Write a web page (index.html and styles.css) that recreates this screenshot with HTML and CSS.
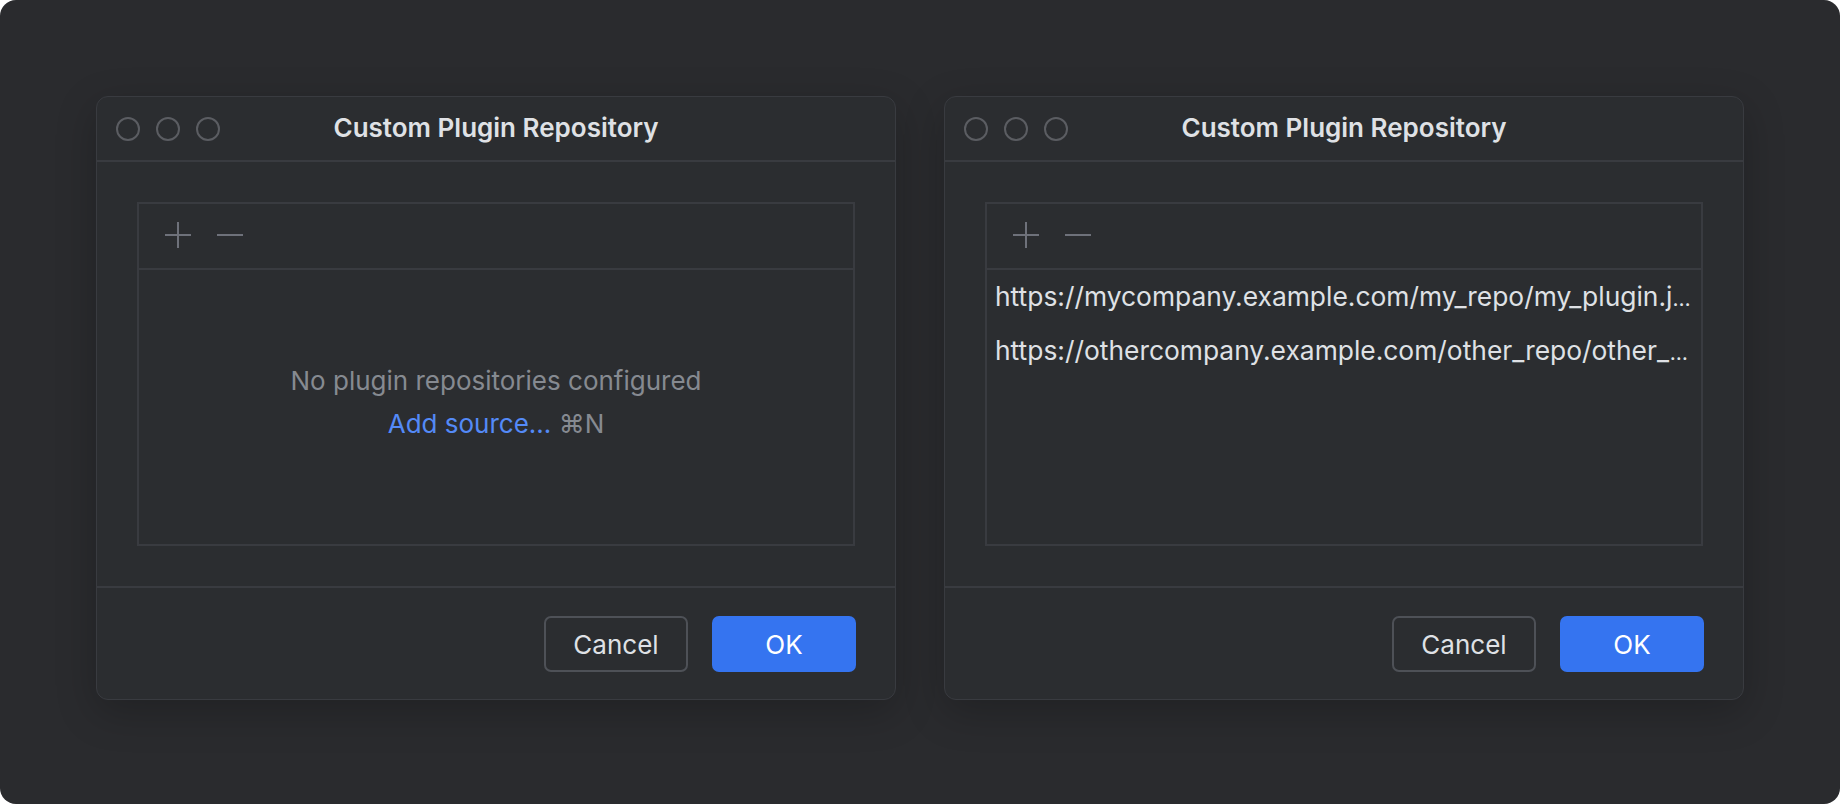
FILE: index.html
```html
<!DOCTYPE html>
<html>
<head>
<meta charset="utf-8">
<link rel="stylesheet" href="styles.css">
</head>
<body>
<div class="stage">
  <div class="dialog">
    <div class="titlebar">
      <div class="lights"><span class="light"></span><span class="light"></span><span class="light"></span></div>
      <div class="title">Custom Plugin Repository</div>
      <div></div>
    </div>
    <div class="body">
      <div class="panel">
        <div class="toolbar">
          <svg class="tool" width="26" height="26" viewBox="0 0 26 26"><path d="M13 0V26M0 13H26" stroke="#6e717a" stroke-width="2"/></svg>
          <svg class="tool" width="26" height="26" viewBox="0 0 26 26"><path d="M0 13H26" stroke="#6e717a" stroke-width="2"/></svg>
        </div>
        <div class="list empty">
          <div class="empty-text">No plugin repositories configured</div>
          <div class="empty-action"><span class="link">Add source...</span> <span class="shortcut">⌘N</span></div>
        </div>
      </div>
    </div>
    <div class="footer">
      <button class="btn cancel">Cancel</button>
      <button class="btn ok">OK</button>
    </div>
  </div>
  <div class="dialog">
    <div class="titlebar">
      <div class="lights"><span class="light"></span><span class="light"></span><span class="light"></span></div>
      <div class="title">Custom Plugin Repository</div>
      <div></div>
    </div>
    <div class="body">
      <div class="panel">
        <div class="toolbar">
          <svg class="tool" width="26" height="26" viewBox="0 0 26 26"><path d="M13 0V26M0 13H26" stroke="#6e717a" stroke-width="2"/></svg>
          <svg class="tool" width="26" height="26" viewBox="0 0 26 26"><path d="M0 13H26" stroke="#6e717a" stroke-width="2"/></svg>
        </div>
        <div class="list">
          <div class="row" title="https://mycompany.example.com/my_repo/my_plugin.jar"><span class="url">https://mycompany.example.com/my_repo/my_plugin.jar</span></div>
          <div class="row" title="https://othercompany.example.com/other_repo/other_plugin.jar"><span class="url">https://othercompany.example.com/other_repo/other_plugin.jar</span></div>
        </div>
      </div>
    </div>
    <div class="footer">
      <button class="btn cancel">Cancel</button>
      <button class="btn ok">OK</button>
    </div>
  </div>
</div>
</body>
</html>
```

FILE: styles.css
```css
* { box-sizing: border-box; }
html, body { margin: 0; background: #ffffff; }
body { font-family: Inter, "Noto Sans", sans-serif; }
.stage {
  width: 1840px;
  height: 804px;
  border-radius: 16px;
  background: #2a2b2e;
  padding: 96px;
  display: flex;
  gap: 48px;
  align-items: flex-start;
}
.dialog {
  width: 800px;
  height: 604px;
  background: #2b2d30;
  border: 1px solid #393b40;
  border-radius: 12px;
  display: flex;
  flex-direction: column;
  box-shadow: 0 12px 40px rgba(0,0,0,0.22);
}
.titlebar {
  height: 65px;
  flex: none;
  border-bottom: 2px solid #393b40;
  display: grid;
  grid-template-columns: 1fr auto 1fr;
  align-items: center;
  padding: 0 19px;
}
.lights { display: flex; gap: 16px; }
.light {
  width: 24px; height: 24px;
  border-radius: 50%;
  border: 2px solid #5b5d62;
}
.title {
  color: #dfe1e5;
  font-size: 26px;
  font-weight: 600;
  padding-bottom: 2px;
}
.body {
  flex: 1;
  padding: 40px 40px 40px;
  display: flex;
}
.panel {
  flex: 1;
  border: 2px solid #393b40;
  display: flex;
  flex-direction: column;
  min-width: 0;
}
.toolbar {
  height: 66px;
  flex: none;
  border-bottom: 2px solid #393b40;
  display: flex;
  align-items: center;
  gap: 26px;
  padding: 0 26px 2px;
}
.tool { display: block; }
.list {
  flex: 1;
  min-width: 0;
}
.list.empty {
  display: flex;
  flex-direction: column;
  align-items: center;
  justify-content: center;
  gap: 6px;
  padding-bottom: 10px;
  font-size: 26px;
  line-height: 37px;
}
.empty-text { color: #868a91; }
.link { color: #548af7; }
.shortcut { color: #868a91; }
.row {
  height: 54px;
  line-height: 52px;
  padding: 0 10px 0 8px;
  color: #dfe1e5;
  font-size: 21px;
  white-space: nowrap;
  overflow: hidden;
  text-overflow: ellipsis;
}
.url { font-size: 26.4px; }
.footer {
  flex: none;
  border-top: 2px solid #393b40;
  display: flex;
  justify-content: flex-end;
  align-items: flex-start;
  gap: 24px;
  padding: 28px 39px 0;
  height: 113px;
}
.btn {
  width: 144px;
  height: 56px;
  border-radius: 7px;
  font-family: Inter, "Noto Sans", sans-serif;
  font-size: 26px;
  padding: 0;
}
.cancel {
  background: transparent;
  border: 2px solid #4e5157;
  color: #dfe1e5;
}
.ok {
  background: #3574f0;
  border: none;
  color: #ffffff;
}
```
